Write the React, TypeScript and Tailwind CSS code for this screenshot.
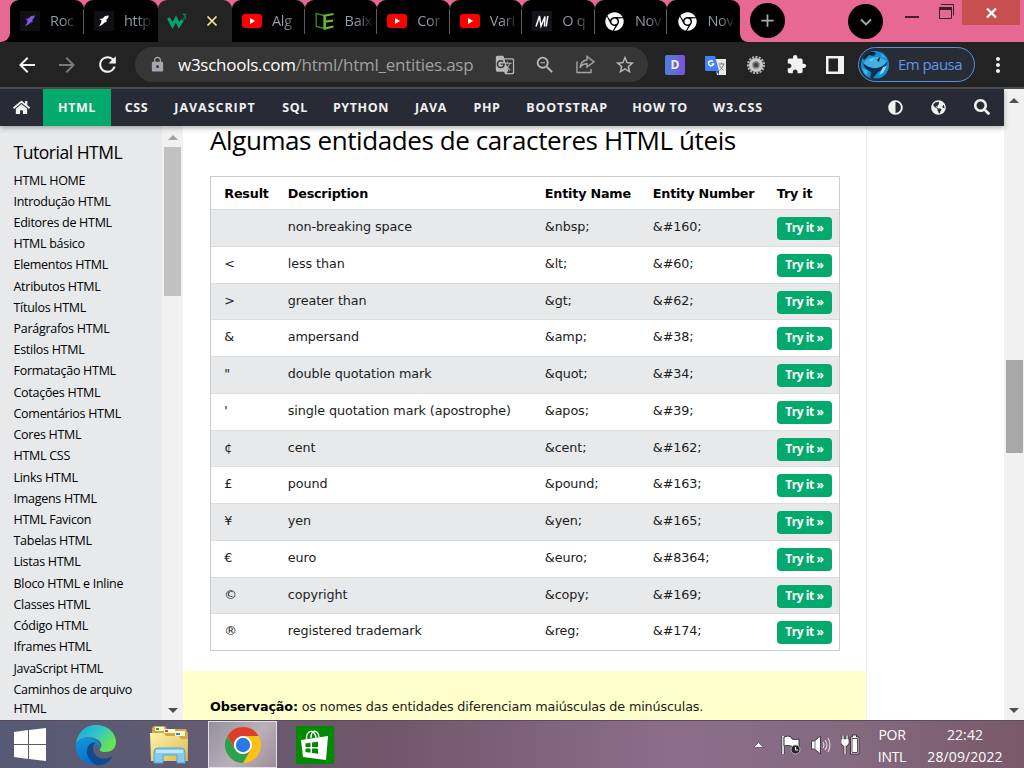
import React from "react";
import {
  MdArrowBack, MdArrowForward, MdRefresh, MdLock, MdGTranslate, MdZoomOut, MdStarBorder,
  MdExtension, MdMoreVert, MdAdd,
} from "react-icons/md";
import { FaAdjust, FaChrome, FaGlobeAmericas, FaSearch, FaHome } from "react-icons/fa";

const UI = "font-['Open_Sans','Noto_Sans',sans-serif]";
const BODY = "font-['DejaVu_Sans',Verdana,sans-serif]";

const Feather = ({ color }: { color: string }) => (
  <svg width="20" height="20" viewBox="0 0 20 20">
    <rect width="20" height="20" fill="#101014" />
    <path d="M15 4.500 11 5 8.500 7.500 5.500 8 7.500 9.500 7 12 5 15.500 8.500 13.500 10.500 11.500 12.500 11 12.500 8.500 14 7Z" fill={color} />
  </svg>
);
const YouTube = () => (
  <svg width="20" height="14" viewBox="0 0 20 14">
    <rect width="20" height="14" rx="3.2" fill="#f00" />
    <path d="M8 4.1 13 7 8 9.9Z" fill="#fff" />
  </svg>
);
const Book = () => (
  <svg width="20" height="18" viewBox="0 0 20 18" fill="none">
    <path d="M9 3.5 1.2 1.5v13L9 16.5Z" stroke="#3e8a22" strokeWidth="1.3" />
    <path d="M18.500 2 9.8 3.6v13L18.500 14.500M10 9.600l8-1" stroke="#67b82e" strokeWidth="2.2" />
  </svg>
);
const W3 = () => (
  <svg width="21" height="18" viewBox="0 0 21 18">
    <path d="m1.500 6 4 7.500 3.500-6.500 3 6.500 3.500-5.500" fill="none" stroke="#04a56b" strokeWidth="3.2" />
    <path d="M15.800 2.300h3l-1.500 2q1.800 0 1.500 1.700-.5 1.500-3 .8" fill="none" stroke="#04a56b" />
  </svg>
);
const Medium = () => (
  <svg width="20" height="20" viewBox="0 0 20 20">
    <rect width="20" height="20" fill="#15141b" />
    <path d="m4 15.500 3.500-10.500 1.500 10 4-9.500-.5 10M15.800 5l-1.500 10.500" fill="none" stroke="#fff" strokeWidth="1.500" />
  </svg>
);
const Translate = () => (
  <svg width="21" height="20" viewBox="0 0 21 20">
    <path d="M9 4h12v16H12Z" fill="#e8e8e8" />
    <path d="M0 1h10l4 15H1.5Q0 16 0 14.5Z" fill="#4084f4" />
    <path d="m11 16 3 4v-4Z" fill="#3050b5" />
    <path d="M8 6.500A2.600 2.600 0 1 0 8.600 9H6.500" fill="none" stroke="#fff" strokeWidth="1.4" />
    <path d="M13.500 9h6M16.500 7.500V9M18.500 9c-.5 3-2 5-4 6.500M14.500 10.500c1 2 2 3.500 4 4.500" fill="none" stroke="#72808a" />
  </svg>
);
const Gear = () => (
  <svg width="20" height="20" viewBox="0 0 20 20">
    <circle cx="10" cy="10" r="8" fill="none" stroke="#b0b0b0" strokeWidth="2.2" strokeDasharray="2.1 1.25" />
    <circle cx="10" cy="10" r="5.400" fill="#777" stroke="#c8c8c8" strokeWidth="3.400" />
    <circle cx="10" cy="10" r="2" fill="#3c3c3c" />
  </svg>
);
const Share = () => (
  <svg width="21" height="19" viewBox="0 0 21 19" fill="none" stroke="#a5a5a5" strokeWidth="1.4">
    <path d="M2 6.5V17.5h14v-3.5" />
    <path d="M12 5V1.5l7 5.3-7 5.2V8.800c-3.500 0-5.500 1.200-7 4C5.500 8 8 5.500 12 5Z" />
  </svg>
);
const Avatar = () => (
  <svg width="28" height="28" viewBox="0 0 28 28">
    <defs><clipPath id="avatar"><circle cx="14" cy="14" r="14" /></clipPath></defs>
    <g clipPath="url(#avatar)">
      <path fill="#168ed3" d="M0 0h28v28H0z" />
      <path d="M3 2q7-3 12 0l-2 3-5-1-5 5-1-2Z" fill="#0a2233" />
      <path d="M2 12Q8 5 17 6l9 4-5 6-9 2Q6 17 2 12Z" fill="#45aee2" />
      <path d="M2 12q6 6 14 5 6-1 11-7l-3 7-7 4-5 6 7 1H9l1-7Q3 18 2 12Z" fill="#07334d" />
      <path d="m19 6-3 3 2 2Z" fill="#06141f" />
      <path d="m8 9 5-2-2 3ZM22 16l4-1-4 7-4 2Z" fill="#83d5fb" />
      <path d="m1 17 6 3-2 5ZM20 2l5 5-4-1Z" fill="#39b9f3" />
    </g>
  </svg>
);

const Tab = ({ icon, label, last }: { icon: React.ReactNode; label: string; last?: boolean }) => (
  <div className="relative flex h-[42px] flex-1 items-center rounded-t-[9px] bg-black pl-[10px]">
    <span className="flex w-5 shrink-0 justify-center">{icon}</span>
    <span className="ml-[10px] whitespace-nowrap bg-[linear-gradient(to_right,#94a0a8_12px,#14171a_27px)] bg-clip-text text-[14.5px] tracking-[-0.3px] text-transparent">{label}</span>
    {!last && <span className="absolute right-0 top-[9px] h-[25px] w-px bg-[#5b5e61]" />}
  </div>
);

const BrowserTop = () => (
  <div className="flex h-[42px] bg-[#e76892]">
    <div className="w-[10px] bg-black"><div className="h-full rounded-br-[9px] bg-[#e76892]" /></div>
    <div className="flex w-[148px]">
      <Tab icon={<Feather color="#8257e5" />} label="Roc" />
      <Tab icon={<Feather color="#fff" />} label="http" last />
    </div>
    <div className="w-[74px] bg-[linear-gradient(to_bottom,#e76892_10px,#000_10px)]">
      <div className="flex h-full items-center rounded-t-[9px] bg-[#232323] pl-[9px]">
        <W3 />
        <svg className="ml-[18px]" width="12" height="12" viewBox="0 0 12 12"><path d="m1.500 1.500 9 9m0-9-9 9" stroke="#f5ed98" strokeWidth="1.700" /></svg>
      </div>
    </div>
    <div className="flex w-[508px]">
      <Tab icon={<YouTube />} label="Alg" />
      <Tab icon={<Book />} label="Baix" />
      <Tab icon={<YouTube />} label="Cor" />
      <Tab icon={<YouTube />} label="Vari" />
      <Tab icon={<Medium />} label="O q" />
      <Tab icon={<FaChrome className="text-[19px] text-white" />} label="Nov" />
      <Tab icon={<FaChrome className="text-[19px] text-white" />} label="Nov" last />
    </div>
    <div className="w-[8px] bg-black"><div className="h-full rounded-bl-[9px] bg-[#e76892]" /></div>
    <div className="ml-[2px] mt-[3px] flex h-[35px] w-[35px] items-center justify-center rounded-full bg-black"><MdAdd className="text-[21px] text-[#a5abb0]" /></div>
    <div className="ml-[63px] mt-[4px] flex h-[35px] w-[35px] items-center justify-center rounded-full bg-black">
      <svg width="12" height="8" viewBox="0 0 12 8"><path d="m1 1.500 5 5 5-5" fill="none" stroke="#a5abb0" strokeWidth="1.8" /></svg>
    </div>
    <div className="ml-[22px] mt-[16px] h-[2px] w-[14px] bg-[#3d2530]" />
    <svg className="ml-5 mt-1" width="15" height="15" viewBox="0 0 15 15"><path d="M2 .5h12.500v11M.500 4.500h12v10H.500Z" fill="none" stroke="#37232d" /><path d="M0 3h13v3H0Z" fill="#37232d" /></svg>
    <div className="ml-[8px] flex h-[25px] w-[58px] items-center justify-center bg-[#c74f50]">
      <svg width="11" height="10" viewBox="0 0 11 10"><path d="m1 .5 9 9m0-9-9 9" stroke="#fff" strokeWidth="2.2" /></svg>
    </div>
  </div>
);

const Toolbar = () => (
  <div className="flex h-[47px] items-center border-b-2 border-[#4d4d4d] bg-[#232323] text-[#f1f1f1]">
    <MdArrowBack className="ml-[15px] text-[24px]" />
    <MdArrowForward className="ml-4 text-[24px] text-[#77797b]" />
    <MdRefresh className="ml-4 text-[25px]" />
    <div className="ml-[15px] flex h-[35px] w-[513px] items-center rounded-full bg-[#363636] text-[#b8b8b8]">
      <MdLock className="ml-[14px] text-[17px] text-[#a4a7ae]" />
      <span className="ml-[12px] w-[298px] whitespace-nowrap text-[17px] tracking-[-0.26px] text-[#a1a1a1]"><span className="text-white">w3schools.com</span>/html/html_entities.asp</span>
      <MdGTranslate className="ml-[19px] text-[20px]" />
      <MdZoomOut className="ml-[19px] text-[22px]" />
      <span className="ml-[19px]"><Share /></span>
      <MdStarBorder className="ml-[18px] text-[22px]" />
    </div>
    <span className="ml-[17px] flex h-[20px] w-[20px] items-center justify-center rounded-[2px] bg-gradient-to-r from-[#4980d9] to-[#7952db] text-[12px] font-bold">D</span>
    <span className="ml-5"><Translate /></span>
    <span className="ml-[20px]"><Gear /></span>
    <MdExtension className="ml-5 text-[21px]" />
    <svg className="ml-[19px]" width="18" height="18" viewBox="0 0 18 18"><path d="M0 0h18v18H0Z" fill="#f1f1f1" /><path d="M2.500 2.500h9.500v13H2.500Z" fill="#232323" /></svg>
    <div className="ml-[14px] flex h-[35px] w-[117px] items-center rounded-full border border-[#5a8ee5] bg-[#282d35] pl-[2px] text-[15px] text-[#6394ed]">
      <Avatar /><span className="ml-[9px] whitespace-nowrap tracking-[-0.55px]">Em pausa</span>
    </div>
    <MdMoreVert className="ml-[11px] text-[24px]" />
  </div>
);

const NavItem = ({ w, children }: { w: string; children: React.ReactNode }) => (
  <span className={`flex items-center justify-center whitespace-nowrap ${w}`}>{children}</span>
);
const SiteNav = () => (
  <nav className="relative z-10 flex h-[37px] w-[1004px] bg-[#282a35] text-[12.5px] font-bold tracking-[0.6px] text-[#f1f1f1] shadow-[0_2px_5px_rgba(0,0,0,0.3)]">
    <NavItem w="w-[43px]"><FaHome className="text-[17px]" /></NavItem>
    <NavItem w="w-[68px] bg-[#04aa6d] pt-px">HTML</NavItem>
    <NavItem w="w-[51px] pt-px">CSS</NavItem>
    <NavItem w="w-[106px] pt-px tracking-[0.95px]">JAVASCRIPT</NavItem>
    <NavItem w="w-[54px] pt-px">SQL</NavItem>
    <NavItem w="w-[78px] pt-px">PYTHON</NavItem>
    <NavItem w="w-[62px] pt-px">JAVA</NavItem>
    <NavItem w="w-[50px] pt-px">PHP</NavItem>
    <NavItem w="w-[110px] pt-px tracking-[0.8px]">BOOTSTRAP</NavItem>
    <NavItem w="w-[76px] pt-px">HOW TO</NavItem>
    <NavItem w="w-[80px] pt-px tracking-[0.9px]">W3.CSS</NavItem>
    <NavItem w="ml-[95px] w-[44px] pb-px"><FaAdjust className="text-[15px]" /></NavItem>
    <NavItem w="w-[43px] pb-px"><FaGlobeAmericas className="text-[15px]" /></NavItem>
    <NavItem w="w-[43px] pb-px"><FaSearch className="text-[16px]" /></NavItem>
  </nav>
);

const lessons = [
  "HTML HOME", "Introdução HTML", "Editores de HTML", "HTML básico", "Elementos HTML", "Atributos HTML",
  "Títulos HTML", "Parágrafos HTML", "Estilos HTML", "Formatação HTML", "Cotações HTML", "Comentários HTML",
  "Cores HTML", "HTML CSS", "Links HTML", "Imagens HTML", "HTML Favicon", "Tabelas HTML", "Listas HTML",
  "Bloco HTML e Inline", "Classes HTML", "Código HTML", "Iframes HTML", "JavaScript HTML",
];

const Arrow = ({ up, color }: { up?: boolean; color: string }) => (
  <svg width="10" height="5" viewBox="0 0 10 5"><path d={up ? "M0 5 5 0l5 5Z" : "M0 0h10L5 5Z"} fill={color} /></svg>
);

const Sidebar = () => (
  <aside className="flex w-[183px] shrink-0 bg-[#e7e9eb] text-black">
    <div className="w-[162px] pl-[13.5px] pt-[13px]">
      <h2 className="h-[30.5px] whitespace-nowrap text-[17.5px] leading-[26px] tracking-[-0.47px]">Tutorial HTML</h2>
      <ul className="text-[12.5px] leading-[21.23px] tracking-[-0.28px]">
        {lessons.map((l) => <li key={l} className="h-[21.23px] whitespace-nowrap">{l}</li>)}
        <li className="pt-px leading-[19px]">Caminhos de arquivo<br />HTML</li>
      </ul>
    </div>
    <div className="flex w-[21px] flex-col items-center bg-[#f1f1f1] pb-[7px] pt-[9px]">
      <Arrow up color="#a3a3a3" />
      <div className="mt-[7px] h-[149px] w-[17px] bg-[#c1c1c1]" />
      <div className="mt-auto"><Arrow color="#505050" /></div>
    </div>
  </aside>
);

const entities = [
  ["", "non-breaking space", "&nbsp;", "&#160;"],
  ["<", "less than", "&lt;", "&#60;"],
  [">", "greater than", "&gt;", "&#62;"],
  ["&", "ampersand", "&amp;", "&#38;"],
  ['"', "double quotation mark", "&quot;", "&#34;"],
  ["'", "single quotation mark (apostrophe)", "&apos;", "&#39;"],
  ["¢", "cent", "&cent;", "&#162;"],
  ["£", "pound", "&pound;", "&#163;"],
  ["¥", "yen", "&yen;", "&#165;"],
  ["€", "euro", "&euro;", "&#8364;"],
  ["©", "copyright", "&copy;", "&#169;"],
  ["®", "registered trademark", "&reg;", "&#174;"],
];
const cols = "grid grid-cols-[63.5px_257px_108px_124px_60px] pl-[13.3px]";

const Content = () => (
  <main className="flex w-[684px] shrink-0 flex-col border-r border-[#eee] bg-white text-black">
    <h1 className={`ml-[27px] h-[50px] whitespace-nowrap text-[26px] leading-[28px] tracking-[-0.41px] ${UI}`}>Algumas entidades de caracteres HTML úteis</h1>
    <div className={`ml-[27px] w-[630px] border border-[#ccc] text-[12.75px] ${BODY}`}>
      <div className={`${cols} h-[32px] items-center pt-px font-bold tracking-[-0.2px]`}>
        <span>Result</span><span>Description</span><span>Entity Name</span><span>Entity Number</span><span>Try it</span>
      </div>
      {entities.map(([r, d, n, c]) => (
        <div key={d} className={`${cols} h-[36.78px] whitespace-nowrap border-t border-[#ddd] leading-[34px] tracking-[-0.09px] text-[#1c1c1c] odd:bg-white even:bg-[#e7e9eb]`}>
          <span>{r}</span><span>{d}</span><span>{n}</span><span>{c}</span>
          <span className={`mt-[7px] h-[23px] w-[55px] rounded-[4px] bg-[#04aa6d] text-center text-[12px] font-bold leading-[21px] tracking-[-0.45px] text-white ${UI}`}>Try it »</span>
        </div>
      ))}
    </div>
    <div className={`mt-[20px] flex-1 bg-[#ffffcc] pl-[27px] pt-[26px] text-[12.75px] leading-[19px] tracking-[-0.145px] text-[#1c1c1c] ${BODY}`}>
      <b className="text-black">Observação:</b> os nomes das entidades diferenciam maiúsculas de minúsculas.
    </div>
  </main>
);

const Edge = () => (
  <svg width="42" height="42" viewBox="0 0 42 42">
    <defs>
      <linearGradient id="edgeA" x1="0" y1="0" x2="1" y2=".5"><stop stopColor="#19a5dc" /><stop offset=".55" stopColor="#30c6ca" /><stop offset="1" stopColor="#65e64e" /></linearGradient>
      <linearGradient id="edgeB" x1="0" y1="0" x2=".3" y2="1"><stop stopColor="#1597dc" /><stop offset="1" stopColor="#0870c8" /></linearGradient>
    </defs>
    <path d="M1 20C2 8 11 1 21 1c12 0 20 8 20 17 0 7-5 10-11 10-4 0-6-1-5-3 3-4 1-9-6-11C11 12 4 14 1 20Z" fill="url(#edgeA)" />
    <path d="M1 20c4-7 12-8 18-5 4 2 7 5 6 9-3-4-8-4-11 1-4 7 2 14 9 16C11 42 0 34 1 20Z" fill="url(#edgeB)" />
    <path d="M14 21c-5 6-1 16 7 20 7 1 13-2 17-9-10 6-21 1-20-9 0-2 1-3 3-4-3-1-5 0-7 2Z" fill="#104b92" />
  </svg>
);
const Folder = () => (
  <svg width="40" height="39" viewBox="0 0 40 39">
    <defs><linearGradient id="folder" x1="0" y1="0" x2="1" y2="1"><stop stopColor="#fff4a8" /><stop offset="1" stopColor="#dfb551" /></linearGradient></defs>
    <path d="M3 3 5 1h11l2 3h19l2 4v28H2Z" fill="#d1a847" />
    <path d="M6 2h9v4H6zM15 4h11v4H15zM26 6h10v5H26z" fill="#fff9d4" />
    <path d="M7 3h3v2H7z" fill="#13a850" /><path d="M16 5h3v2h-3z" fill="#d94b35" /><path d="M27 8h4v2h-4z" fill="#288bd9" />
    <path d="M1 8h14l2 3h13l2 3h7l-1 22H2Z" fill="url(#folder)" />
    <path d="M5 27q0-4 4-4h23q4 0 4 4v11h-8v-8H14v8H5Z" fill="#84cbed" stroke="#4fa7cf" />
    <path d="M7 25h27v3H7Z" fill="#d1f2ff" opacity=".75" />
  </svg>
);
const ChromeColor = () => (
  <svg width="38" height="38" viewBox="0 0 38 38">
    <circle cx="19" cy="19" r="18" fill="#fbc116" />
    <path d="M3.400 10A18 18 0 0 1 34.600 10H19a9 9 0 0 0-7.800 13.500Z" fill="#df3c30" />
    <path d="M3.400 10A18 18 0 0 0 19 37l7.800-13.500a9 9 0 0 1-15.600 0Z" fill="#2da04e" />
    <circle cx="19" cy="19" r="9" fill="#fff" /><circle cx="19" cy="19" r="7.200" fill="#287ae6" />
  </svg>
);
const Store = () => (
  <svg width="38" height="38" viewBox="0 0 38 38">
    <path d="M0 0h38v38H0z" fill="#008a00" />
    <path d="M10.500 13C10 4 19 2 20 12M15 12c0-10 7-8 8-1" fill="none" stroke="#fff" strokeWidth="1.4" />
    <path d="m5 14 27-4-2 24-23-3Z" fill="#fff" />
    <path d="m9.500 17.500 5-.7V21h-5zM16 16.600l6-.8V21h-6zM9.500 22.500h5v4.300l-5-.7zM16 22.500h6v5.200l-6-.8z" fill="#008a00" />
  </svg>
);

const Taskbar = () => (
  <footer className="flex h-[48px] items-center border-t border-[#594b60] bg-[linear-gradient(90deg,#555a74_0%,#625b73_20%,#705569_36%,#8c6e8a_66%,#84697f_84%,#79586a_100%)] text-white">
    <svg className="ml-[14px]" width="32" height="33" viewBox="0 0 32 33"><path d="m0 4 14-2v14H0zM15 2l17-2v16H15zM0 17h14v14L0 29zM15 17h17v16l-17-2z" fill="#fff" /></svg>
    <span className="ml-[29px]"><Edge /></span>
    <span className="ml-[32px]"><Folder /></span>
    <div className="ml-[19px] flex h-[47px] w-[69px] items-center justify-center border border-[#e3dfe6] bg-[linear-gradient(130deg,#9291a0,#bcb0b9_55%,#9c8d9a)]"><ChromeColor /></div>
    <span className="ml-[19px]"><Store /></span>
    <svg className="ml-[419px]" width="11" height="6" viewBox="0 0 11 6"><path d="M.5 5.500 5.500.5l5 5Z" fill="#fff" stroke="#4d3d4d" strokeWidth=".7" /></svg>
    <svg className="ml-[17px]" width="21" height="22" viewBox="0 0 21 22"><path d="M2 2v18" stroke="#342c34" strokeWidth="3" /><path d="M2 2v18" stroke="#fff" strokeWidth="1.6" /><path d="M3 3q4-2 7 0l1 2q3 1 7 0v9q-4 1-8-2-4-1-7 0Z" fill="#fff" stroke="#3d333d" /><circle cx="14.500" cy="15.500" r="4.500" fill="#282528" stroke="#bab4ba" /><path d="M14.500 13v3h2.500" stroke="#fff" fill="none" /></svg>
    <svg className="ml-[8px]" width="21" height="20" viewBox="0 0 21 20"><path d="M1.500 6h3l6-5v18l-6-5h-3Z" fill="#fff" stroke="#483c48" /><path d="M5 6v8" stroke="#83737f" /><path d="M13 7q2 3 0 6m2-8q4 5 0 10m3-12q4 7 0 14" stroke="#e4dae2" strokeWidth="1.100" fill="none" /></svg>
    <svg className="ml-[10px]" width="20" height="21" viewBox="0 0 20 21"><path d="M2 1.500v4m4-4v4M1 6h6v3L5.500 11h-3L1 9ZM4 11v9" stroke="#403640" strokeWidth="3" /><path d="M2 1.500v4m4-4v4M1 6h6v3L5.500 11h-3L1 9ZM4 11v9" stroke="#fff" strokeWidth="1.300" fill="#fff" /><path d="M9.500 3h2V1h4v2h2.500v17H9.500Z" fill="#fff" stroke="#403640" /><path d="M11 4.500h5.500v14H11Z" fill="#fff" stroke="#5c4b59" /></svg>
    <div className="ml-[6px] flex h-full w-[50px] flex-col items-center pt-[3px] text-[14px] leading-[22px] tracking-[-0.3px]"><span>POR</span><span>INTL</span></div>
    <div className="ml-auto mr-[12px] flex h-full w-[94px] flex-col items-center whitespace-nowrap pt-[3px] text-[14px] leading-[22px] tracking-[0.1px]"><span>22:42</span><span>28/09/2022</span></div>
  </footer>
);

export default function App() {
  return (
    <div className={`flex h-[768px] w-[1024px] flex-col overflow-hidden bg-white ${UI}`}>
      <BrowserTop />
      <Toolbar />
      <div className="flex h-[631px]">
        <div className="flex w-[1004px] flex-col">
          <SiteNav />
          <div className="flex h-[594px]"><Sidebar /><Content /></div>
        </div>
        <div className="flex w-5 flex-col items-center bg-[#f1f1f1] pb-[7px] pt-[9px]">
          <Arrow up color="#505050" />
          <div className="mt-[257px] h-[93px] w-[17px] bg-[#a8a8a8]" />
          <div className="mt-auto"><Arrow color="#505050" /></div>
        </div>
      </div>
      <Taskbar />
    </div>
  );
}
